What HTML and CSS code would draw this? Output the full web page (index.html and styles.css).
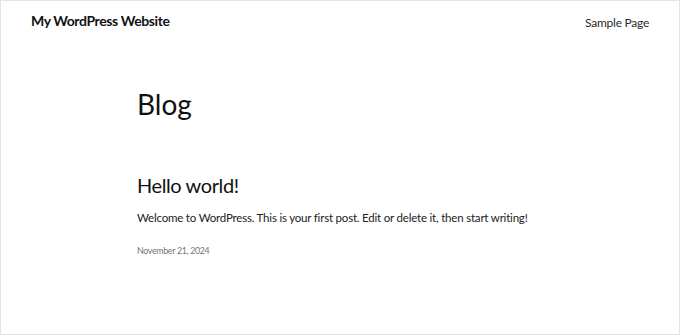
FILE: index.html
```html
<!DOCTYPE html>
<html lang="en">
<head>
<meta charset="utf-8">
<title>My WordPress Website</title>
<link rel="stylesheet" href="styles.css">
</head>
<body>
<div class="page">
  <header class="site-header">
    <a class="site-title" href="#">My WordPress Website</a>
    <nav class="site-nav"><a href="#">Sample Page</a></nav>
  </header>
  <main class="content">
    <h1 class="page-title">Blog</h1>
    <article class="post">
      <h2 class="post-title">Hello world!</h2>
      <p class="post-excerpt">Welcome to WordPress. This is your first post. Edit or delete it, then start writing!</p>
      <div class="post-date">November 21, 2024</div>
    </article>
  </main>
</div>
</body>
</html>
```
FILE: styles.css
```css
html, body {
  margin: 0;
  padding: 0;
  background: #ffffff;
}
body {
  font-family: Lato, "Noto Sans", "Liberation Sans", sans-serif;
  color: #111111;
}
.page {
  box-sizing: border-box;
  width: 680px;
  height: 335px;
  border: 1px solid #e4e4e4;
  display: flex;
  flex-direction: column;
}
.site-header {
  display: flex;
  justify-content: space-between;
  align-items: center;
  padding: 11px 30px 0 30px;
  height: 18px;
}
.site-title {
  font-size: 14px;
  font-weight: 700;
  letter-spacing: -0.4px;
  color: #111111;
  text-decoration: none;
  line-height: 18px;
}
.site-nav a {
  font-size: 12px;
  font-weight: 400;
  letter-spacing: -0.25px;
  color: #2a2a2a;
  text-decoration: none;
  line-height: 18px;
}
.content {
  padding-left: 136px;
}
.page-title {
  margin: 57px 0 0 0;
  font-size: 28px;
  font-weight: 400;
  letter-spacing: 0;
  line-height: 34px;
}
.post {
  margin-top: 51px;
}
.post-title {
  margin: 0;
  font-size: 20px;
  font-weight: 400;
  letter-spacing: -0.4px;
  line-height: 26px;
}
.post-excerpt {
  margin: 12px 0 0 0;
  font-size: 11.5px;
  line-height: 16px;
  letter-spacing: -0.2px;
  color: #222222;
}
.post-date {
  margin-top: 18px;
  font-size: 8.8px;
  line-height: 14px;
  letter-spacing: -0.3px;
  color: #737373;
}
```
